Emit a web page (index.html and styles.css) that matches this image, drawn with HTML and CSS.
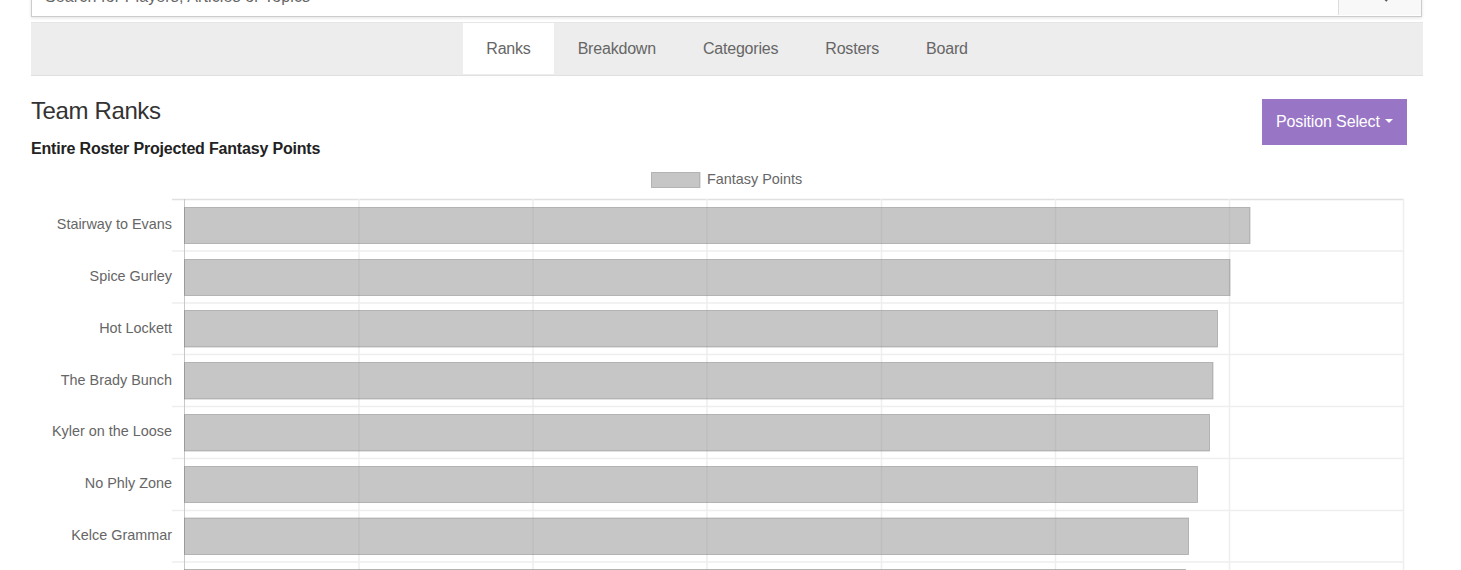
FILE: index.html
```html
<!DOCTYPE html>
<html lang="en">
<head>
<meta charset="utf-8">
<title>Team Ranks</title>
<link rel="stylesheet" href="styles.css">
</head>
<body>
<div class="page">
  <form class="search">
    <input class="search-input" type="text" placeholder="Search for Players, Articles or Topics">
    <button class="search-btn" type="button" aria-label="Search">
      <svg class="search-icon" viewBox="0 0 16 16" width="16" height="16"><circle cx="6.5" cy="6.5" r="5"/><path d="M10.5 10.5L15 15"/></svg>
    </button>
  </form>
  <nav class="tabs">
    <a class="tab active">Ranks</a>
    <a class="tab">Breakdown</a>
    <a class="tab">Categories</a>
    <a class="tab">Rosters</a>
    <a class="tab">Board</a>
  </nav>
  <section class="head">
    <div class="titles">
      <h2 class="title">Team Ranks</h2>
      <h3 class="subtitle">Entire Roster Projected Fantasy Points</h3>
    </div>
    <button class="select-btn" type="button">Position Select<span class="caret"></span></button>
  </section>
  <svg class="chart" width="1423" height="420" viewBox="0 0 1423 420">
    <g class="legend">
      <rect class="bar" x="620.5" y="5.5" width="48.5" height="15"/>
      <text class="legend-text" x="676" y="16.5">Fantasy Points</text>
    </g>
    <g class="grid" transform="translate(0 -167)">
      <path class="top" d="M141 199.5H1373"/>
      <path d="M141 251H1373M141 303H1373M141 354.5H1373M141 406.5H1373M141 458.5H1373M141 510.5H1373M141 562H1373"/>
      <path d="M328 199V590M502 199V590M676 199V590M850.5 199V590M1024.5 199V590M1198.5 199V590M1372.5 199V590"/>
      <path class="axis" d="M153.5 199V590"/>
      <rect class="bar" x="153.5" y="207.5" width="1065.5" height="36"/>
      <rect class="bar" x="153.5" y="259.5" width="1045.5" height="36"/>
      <rect class="bar" x="153.5" y="310.5" width="1033" height="36.5"/>
      <rect class="bar" x="153.5" y="362.5" width="1028.5" height="36.5"/>
      <rect class="bar" x="153.5" y="414.5" width="1025" height="36.5"/>
      <rect class="bar" x="153.5" y="466.5" width="1013" height="36"/>
      <rect class="bar" x="153.5" y="518" width="1004" height="36.5"/>
      <rect class="bar" x="153.5" y="569.5" width="1001" height="36.5"/>
      <g class="labels">
        <text x="141" y="229">Stairway to Evans</text>
        <text x="141" y="281">Spice Gurley</text>
        <text x="141" y="333">Hot Lockett</text>
        <text x="141" y="385">The Brady Bunch</text>
        <text x="141" y="436">Kyler on the Loose</text>
        <text x="141" y="488">No Phly Zone</text>
        <text x="141" y="540">Kelce Grammar</text>
      </g>
    </g>
  </svg>
</div>
</body>
</html>
```
FILE: styles.css
```css
html, body {
  margin: 0;
  padding: 0;
  height: 570px;
  overflow: hidden;
  background: #fff;
}
body {
  font-family: "Liberation Sans", Arial, sans-serif;
  color: #333;
}
.page {
  width: 1392px;
  margin-left: 31px;
}
.search {
  display: flex;
  width: 1391px;
  height: 39px;
  margin-top: -22px;
  box-sizing: border-box;
  border: 1px solid #ccc;
  border-top: 0;
  box-shadow: 0 1px 3px rgba(0,0,0,.12);
  background: #fff;
}
.search-input {
  flex: 1;
  min-width: 0;
  box-sizing: border-box;
  height: 38px;
  padding: 0 13px;
  border: 0;
  outline: 0;
  background: transparent;
  font: 16px "Liberation Sans", Arial, sans-serif;
  letter-spacing: .13px;
}
.search-input::placeholder {
  color: #666;
  opacity: 1;
}
.search-btn {
  display: flex;
  align-items: center;
  justify-content: center;
  box-sizing: border-box;
  width: 83px;
  height: 37px;
  padding: 0 0 5px;
  border: 0;
  border-left: 1px solid #ddd;
  background: #f8f8f8;
}
.search-icon {
  fill: none;
  stroke: #555;
  stroke-width: 2;
}
.tabs {
  display: flex;
  justify-content: center;
  height: 54px;
  margin-top: 5px;
  box-sizing: border-box;
  background: #ededed;
  border-top: 1px solid #e6e6e6;
  border-bottom: 1px solid #e0e0e0;
}
.tab {
  display: flex;
  align-items: center;
  height: 51px;
  padding: 0 23.5px;
  font-size: 16px;
  letter-spacing: -.2px;
  color: #666;
}
.tab.active {
  background: #fff;
}
.head {
  display: flex;
  justify-content: space-between;
  align-items: flex-start;
  padding-right: 16px;
}
.titles {
  padding-top: 21px;
}
.title {
  margin: 0;
  font-size: 24px;
  font-weight: 400;
  line-height: 28px;
  letter-spacing: -.38px;
  color: #333;
}
.subtitle {
  margin: 15px 0 0;
  font-size: 16px;
  font-weight: 700;
  line-height: 18px;
  letter-spacing: -.18px;
  color: #222;
}
.select-btn {
  display: flex;
  align-items: center;
  width: 145px;
  height: 46px;
  margin-top: 23px;
  padding: 0 0 0 14px;
  border: 0;
  background: #9875c5;
  color: #fff;
  font: 16px "Liberation Sans", Arial, sans-serif;
  letter-spacing: -.14px;
}
.caret {
  width: 0;
  height: 0;
  margin-left: 5px;
  margin-bottom: 2px;
  border-top: 4px solid #fff;
  border-left: 4px solid transparent;
  border-right: 4px solid transparent;
}
.chart {
  display: block;
  margin-top: 9px;
}
.grid path {
  fill: none;
  stroke: #eee;
  stroke-width: 1.5;
}
.grid .top {
  stroke: #e0e0e0;
}
.grid .axis {
  stroke: #c8c8c8;
  stroke-width: 1;
}
.bar {
  fill: rgba(142,142,142,.5);
  stroke: rgba(110,110,110,.4);
  stroke-width: 1;
}
.legend-text, .labels text {
  font-family: "Liberation Sans", Arial, sans-serif;
  font-size: 14.4px;
  fill: #666;
}
.labels text {
  text-anchor: end;
}
```
